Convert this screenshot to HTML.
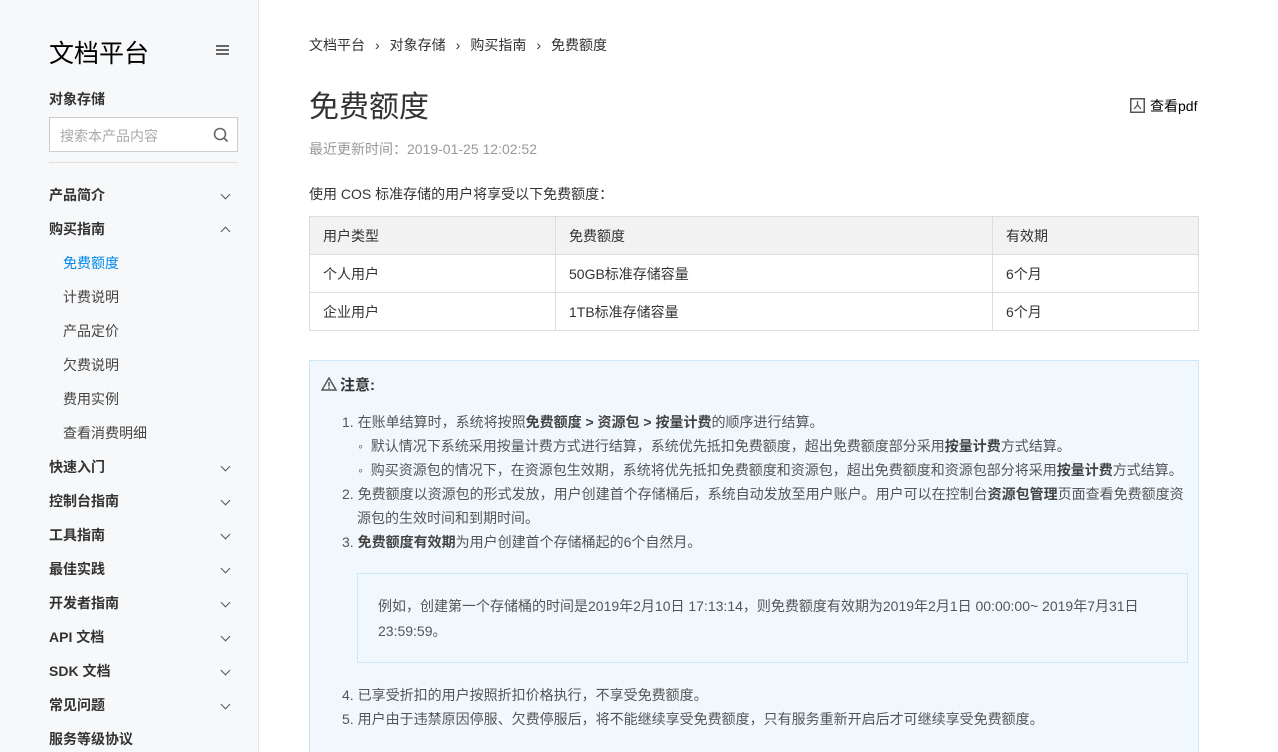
<!DOCTYPE html>
<html style="width:1278px;height:752px;overflow:hidden"><head><meta charset="utf-8"><style>
*{margin:0;padding:0;box-sizing:border-box}
body{width:1278px;height:752px;overflow:hidden;font-family:"Liberation Sans","Noto Sans CJK SC",sans-serif;color:#333;background:#fff;position:relative}
.side{position:absolute;left:0;top:0;width:259px;height:752px;background:#f7f8fa;border-right:1px solid #e5e5e5}
.logo{position:absolute;left:49px;top:34px;font-size:25px;color:#000}
.ham{position:absolute;left:216px;top:45px;width:13px}
.ham i{display:block;height:2px;background:#666;margin-bottom:2px}
.prod{position:absolute;left:49px;top:89px;font-size:14px;font-weight:bold}
.search{position:absolute;left:49px;top:117px;width:189px;height:35px;border:1px solid #ccc;background:#fff;font-size:14px;color:#aaa;padding:8px 10px}
.hr{position:absolute;left:49px;top:162px;width:189px;height:1px;background:#e0e0e0}
.nav{position:absolute;left:49px;width:190px;font-size:14px}
.nav div{height:34px;line-height:34px;position:relative}
.nav .b{font-weight:bold;color:#333}
.nav .s{padding-left:14px;color:#444}
.nav .a{color:#0088ee}
.car{position:absolute;right:10px;top:13px;width:7px;height:7px;border-right:1.5px solid #555;border-bottom:1.5px solid #555;transform:rotate(45deg)}
.car.up{transform:rotate(-135deg);top:16px}
.main{position:absolute;left:309px;top:0;width:890px}
.bc{position:absolute;top:35px;font-size:14px;color:#333}
.bc span{color:#333;margin:0 10px}
h1{position:absolute;top:82px;font-size:30px;font-weight:normal;color:#333}
.pdf{position:absolute;left:821px;top:96px;font-size:14px;color:#000}
.upd{position:absolute;top:139px;font-size:14px;color:#999}
.intro{position:absolute;top:184px;font-size:14px}
table{position:absolute;top:216px;width:890px;border-collapse:collapse;font-size:14px}
td{border:1px solid #ddd;height:38px;padding-left:13px}
tr:first-child td{background:#f2f2f2}
.note{position:absolute;left:309px;top:360px;width:890px;height:392px;background:#f0f8fe;border:1px solid #cce8f8;border-bottom:none}
.nt{position:absolute;left:11px;top:13px;font-size:15px;font-weight:bold}
.li{position:absolute;font-size:14px;color:#555;white-space:nowrap}
.li b{color:#444}
.ex{position:absolute;left:47px;top:212px;width:831px;height:90px;border:1px solid #cce8f8;padding:20px 20px;font-size:14px;color:#555;line-height:25px}
</style></head><body>
<div class="side">
<div class="logo">文档平台</div>
<div class="ham"><i></i><i></i><i></i></div>
<div class="prod">对象存储</div>
<div class="search">搜索本产品内容
<svg style="position:absolute;right:8px;top:9px" width="16" height="16" viewBox="0 0 16 16"><circle cx="7" cy="7" r="5.5" fill="none" stroke="#666" stroke-width="1.6"/><path d="M11 11l3.5 3.5" stroke="#666" stroke-width="1.8"/></svg></div>
<div class="hr"></div>
<div class="nav" style="top:178px">
<div class="b">产品简介<i class="car"></i></div>
<div class="b">购买指南<i class="car up"></i></div>
<div class="s a">免费额度</div>
<div class="s">计费说明</div>
<div class="s">产品定价</div>
<div class="s">欠费说明</div>
<div class="s">费用实例</div>
<div class="s">查看消费明细</div>
<div class="b">快速入门<i class="car"></i></div>
<div class="b">控制台指南<i class="car"></i></div>
<div class="b">工具指南<i class="car"></i></div>
<div class="b">最佳实践<i class="car"></i></div>
<div class="b">开发者指南<i class="car"></i></div>
<div class="b">API 文档<i class="car"></i></div>
<div class="b">SDK 文档<i class="car"></i></div>
<div class="b">常见问题<i class="car"></i></div>
<div class="b">服务等级协议</div>
</div>
</div>
<div class="main">
<div class="bc">文档平台<span>›</span>对象存储<span>›</span>购买指南<span>›</span>免费额度</div>
<h1>免费额度</h1>
<div class="pdf"><svg width="15" height="15" viewBox="0 0 15 15" style="vertical-align:-2px;margin-right:5px"><rect x="0.75" y="0.75" width="13.5" height="13.5" fill="none" stroke="#555" stroke-width="1.5"/><path d="M7.5 3v4M4 11l3.5-4 3.5 4" fill="none" stroke="#555" stroke-width="1.3"/></svg>查看pdf</div>
<div class="upd">最近更新时间：2019-01-25 12:02:52</div>
<div class="intro">使用 COS 标准存储的用户将享受以下免费额度：</div>
<table>
<tr><td style="width:246px">用户类型</td><td style="width:437px">免费额度</td><td>有效期</td></tr>
<tr><td>个人用户</td><td>50GB标准存储容量</td><td>6个月</td></tr>
<tr><td>企业用户</td><td>1TB标准存储容量</td><td>6个月</td></tr>
</table>
</div>
<div class="note">
<div class="nt"><svg width="16" height="14" viewBox="0 0 16 14" style="vertical-align:-1px;margin-right:3px"><path d="M8 1L15 13H1Z" fill="none" stroke="#555" stroke-width="1.5"/><path d="M8 5v4.5M8 10.5v1.5" stroke="#555" stroke-width="1.5"/></svg>注意:</div>
<div class="li" style="left:32px;top:51px">1. 在账单结算时，系统将按照<b>免费额度 &gt; 资源包 &gt; 按量计费</b>的顺序进行结算。</div>
<div class="li" style="left:48px;top:75px">◦&nbsp; 默认情况下系统采用按量计费方式进行结算，系统优先抵扣免费额度，超出免费额度部分采用<b>按量计费</b>方式结算。</div>
<div class="li" style="left:48px;top:99px">◦&nbsp; 购买资源包的情况下，在资源包生效期，系统将优先抵扣免费额度和资源包，超出免费额度和资源包部分将采用<b>按量计费</b>方式结算。</div>
<div class="li" style="left:32px;top:123px">2. 免费额度以资源包的形式发放，用户创建首个存储桶后，系统自动发放至用户账户。用户可以在控制台<b>资源包管理</b>页面查看免费额度资</div>
<div class="li" style="left:47px;top:147px">源包的生效时间和到期时间。</div>
<div class="li" style="left:32px;top:171px">3. <b>免费额度有效期</b>为用户创建首个存储桶起的6个自然月。</div>
<div class="ex">例如，创建第一个存储桶的时间是2019年2月10日 17:13:14，则免费额度有效期为2019年2月1日 00:00:00~ 2019年7月31日<br>23:59:59。</div>
<div class="li" style="left:32px;top:324px">4. 已享受折扣的用户按照折扣价格执行，不享受免费额度。</div>
<div class="li" style="left:32px;top:348px">5. 用户由于违禁原因停服、欠费停服后，将不能继续享受免费额度，只有服务重新开启后才可继续享受免费额度。</div>
</div>
</body></html>
